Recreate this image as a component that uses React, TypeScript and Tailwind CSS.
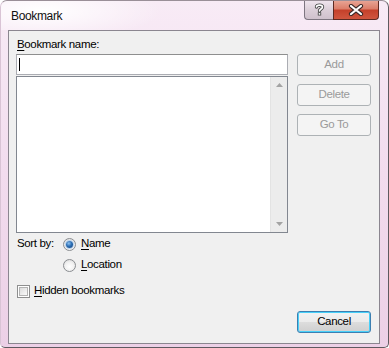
import React from "react";

function Radio({ checked }: { checked?: boolean }) {
  return (
    <div className="w-[13px] h-[13px] rounded-full border border-[#8a8d91] bg-[radial-gradient(circle_at_50%_60%,#ffffff_0%,#f1f1f1_50%,#d4d4d4_100%)] flex items-center justify-center shrink-0">
      {checked && (
        <div className="w-[7px] h-[7px] rounded-full bg-[radial-gradient(circle_at_40%_35%,#8fc2f0_0%,#2c6fb5_45%,#103d78_100%)] shadow-[0_0_0_1px_#b9d3ee]" />
      )}
    </div>
  );
}

function Check() {
  return (
    <div className="w-[13px] h-[13px] border border-[#8e8f8f] bg-white p-[1px] shrink-0">
      <div className="w-full h-full border border-[#b3b3b3] bg-gradient-to-br from-[#dcdcdc] to-[#fbfbfb]" />
    </div>
  );
}

function DisabledBtn({ label }: { label: string }) {
  return (
    <div className="w-[74px] h-[22px] rounded-[3px] border border-[#adb2b5] bg-[#f4f4f4] flex items-center justify-center text-[#9a9a9a]">
      {label}
    </div>
  );
}

export default function App() {
  return (
    <div className="w-[389px] h-[348px] flex flex-col overflow-hidden rounded-t-[7px] rounded-b-[5px] border border-[#5e5a60] border-l-[#d9c4d5] border-t-[#9a8f98] bg-gradient-to-b from-[#f8ebf6] via-[#f2dcee] to-[#ecd0e6] text-[11.5px] tracking-[-0.35px] text-black font-['Liberation_Sans',Arial,sans-serif]">
      {/* Title bar */}
      <div className="h-[29px] flex justify-between items-start pl-[10px] pr-[9px] shrink-0 bg-[radial-gradient(ellipse_120px_30px_at_40px_10px,#ffffff_0%,rgba(255,255,255,0)_100%)]">
        <span className="mt-[7px] leading-[16px] text-[12px] text-[#111]">Bookmark</span>
        <div className="flex -mt-[1px]">
          <div className="w-[29px] h-[20px] rounded-bl-[4px] border border-[#7d7580] border-t-0 border-r-0 bg-gradient-to-b from-[#f1e6ef] via-[#dccfd9] to-[#cfc1cc] flex items-center justify-center">
            <svg width="11" height="13" viewBox="0 0 11 13">
              <path d="M2.5 4 C2.5 1.5 8.5 1.5 8.5 4 C8.5 6 5.5 6 5.5 8" fill="none" stroke="#4a4a4a" strokeWidth="3.4" strokeLinecap="round" />
              <rect x="3.8" y="9.3" width="3.4" height="3.2" fill="#4a4a4a" />
              <path d="M2.5 4 C2.5 1.5 8.5 1.5 8.5 4 C8.5 6 5.5 6 5.5 8" fill="none" stroke="#ffffff" strokeWidth="1.6" strokeLinecap="round" />
              <rect x="4.7" y="10.1" width="1.6" height="1.6" fill="#ffffff" />
            </svg>
          </div>
          <div className="w-[46px] h-[20px] rounded-br-[4px] border border-[#5d2a22] border-t-0 bg-[linear-gradient(to_bottom,#e9a899_0%,#dc7f6b_45%,#c5412b_55%,#d0563f_100%)] flex items-center justify-center">
            <svg width="16" height="12" viewBox="0 0 16 12">
              <path d="M3 2 L13 10 M13 2 L3 10" stroke="#3d2a28" strokeWidth="4.2" strokeLinecap="round" />
              <path d="M3 2 L13 10 M13 2 L3 10" stroke="#ffffff" strokeWidth="2.2" strokeLinecap="round" />
            </svg>
          </div>
        </div>
      </div>

      {/* Client area */}
      <div className="flex-1 ml-[7px] mr-[8px] mb-[3px] border border-[#8b8690] bg-[#f0f0f0] flex flex-col pl-[7px] pr-[8px]">
        <div className="flex gap-[9px]">
          <div className="w-[272px] flex flex-col">
            <div className="mt-[5px] h-[16px] leading-[16px] pl-[1px]">
              <span className="underline underline-offset-2">B</span>ookmark name:
            </div>
            <div className="mt-[2px] h-[21px] border border-[#abadb3] border-t-[#8e8f8f] bg-white flex items-center pl-[2px]">
              <div className="w-[1px] h-[13px] bg-black" />
            </div>
            <div className="mt-[1px] h-[157px] border border-[#828790] bg-white flex justify-end">
              <div className="w-[17px] h-full bg-[#ececec] border-l border-[#e3e3e3] flex flex-col justify-between items-center py-[6px]">
                <svg width="7" height="4" viewBox="0 0 7 4">
                  <path d="M0 4 L3.5 0 L7 4 Z" fill="#a3a3a3" />
                </svg>
                <svg width="7" height="4" viewBox="0 0 7 4">
                  <path d="M0 0 L3.5 4 L7 0 Z" fill="#a3a3a3" />
                </svg>
              </div>
            </div>
          </div>
          <div className="flex flex-col gap-[8px] pt-[23px]">
            <DisabledBtn label="Add" />
            <DisabledBtn label="Delete" />
            <DisabledBtn label="Go To" />
          </div>
        </div>

        <div className="mt-[3px] flex items-center h-[16px] pl-[1px]">
          <span className="w-[46px]">Sort by:</span>
          <Radio checked />
          <span className="ml-[5px]">
            <span className="underline underline-offset-2">N</span>ame
          </span>
        </div>
        <div className="mt-[5px] flex items-center h-[16px] pl-[47px]">
          <Radio />
          <span className="ml-[5px]">
            <span className="underline underline-offset-2">L</span>ocation
          </span>
        </div>
        <div className="mt-[10px] flex items-center h-[16px] pl-[1px]">
          <Check />
          <span className="ml-[4px]">
            <span className="underline underline-offset-2">H</span>idden bookmarks
          </span>
        </div>

        <div className="mt-[12px] flex justify-end">
          <div className="w-[74px] h-[22px] rounded-[3px] border border-[#3c7fb1] shadow-[inset_0_0_0_1px_#48d0f9] bg-[linear-gradient(to_bottom,#f2f2f2_0%,#ebebeb_50%,#dddddd_50%,#cfcfcf_100%)] flex items-center justify-center">
            Cancel
          </div>
        </div>
      </div>
    </div>
  );
}
